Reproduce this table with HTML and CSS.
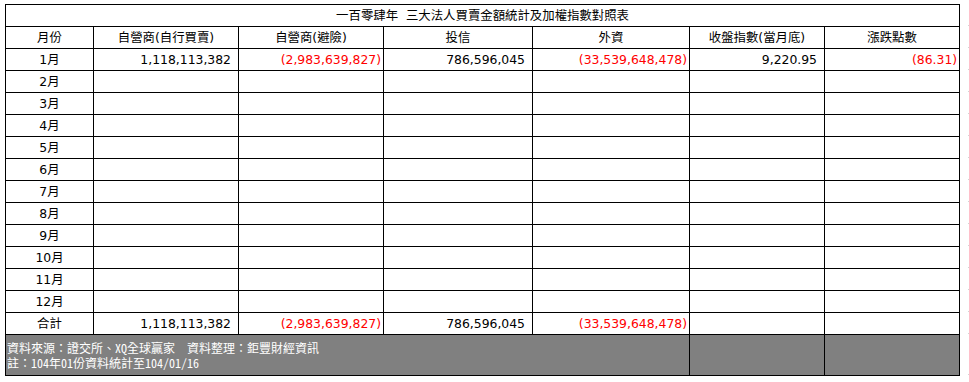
FILE: index.html
```html
<!DOCTYPE html>
<html lang="zh-Hant">
<head>
<meta charset="utf-8">
<title>三大法人買賣金額統計</title>
<link rel="stylesheet" href="styles.css">
</head>
<body>
<div class="sheet">
  <table class="report">
    <colgroup>
      <col class="c-month">
      <col class="c-a">
      <col class="c-b">
      <col class="c-c">
      <col class="c-d">
      <col class="c-e">
      <col class="c-f">
    </colgroup>
    <tr><td class="title" colspan="7">一百零肆年&nbsp;&nbsp;三大法人買賣金額統計及加權指數對照表</td></tr>
    <tr class="head">
      <td>月份</td><td>自營商(自行買賣)</td><td>自營商(避險)</td><td>投信</td><td>外資</td><td>收盤指數(當月底)</td><td>漲跌點數</td>
    </tr>
    <tr>
      <td class="m">1月</td>
      <td class="pos">1,118,113,382</td>
      <td class="neg">(2,983,639,827)</td>
      <td class="pos">786,596,045</td>
      <td class="neg">(33,539,648,478)</td>
      <td class="pos">9,220.95</td>
      <td class="neg">(86.31)</td>
    </tr>
    <tr><td class="m">2月</td><td></td><td></td><td></td><td></td><td></td><td></td></tr>
    <tr><td class="m">3月</td><td></td><td></td><td></td><td></td><td></td><td></td></tr>
    <tr><td class="m">4月</td><td></td><td></td><td></td><td></td><td></td><td></td></tr>
    <tr><td class="m">5月</td><td></td><td></td><td></td><td></td><td></td><td></td></tr>
    <tr><td class="m">6月</td><td></td><td></td><td></td><td></td><td></td><td></td></tr>
    <tr><td class="m">7月</td><td></td><td></td><td></td><td></td><td></td><td></td></tr>
    <tr><td class="m">8月</td><td></td><td></td><td></td><td></td><td></td><td></td></tr>
    <tr><td class="m">9月</td><td></td><td></td><td></td><td></td><td></td><td></td></tr>
    <tr><td class="m">10月</td><td></td><td></td><td></td><td></td><td></td><td></td></tr>
    <tr><td class="m">11月</td><td></td><td></td><td></td><td></td><td></td><td></td></tr>
    <tr><td class="m">12月</td><td></td><td></td><td></td><td></td><td></td><td></td></tr>
    <tr>
      <td class="m">合計</td>
      <td class="pos">1,118,113,382</td>
      <td class="neg">(2,983,639,827)</td>
      <td class="pos">786,596,045</td>
      <td class="neg">(33,539,648,478)</td>
      <td></td>
      <td></td>
    </tr>
    <tr class="foot">
      <td colspan="5" class="note">資料來源：證交所、XQ全球贏家　資料整理：鉅豐財經資訊<br>註：104年01份資料統計至104/01/16</td>
      <td></td>
      <td></td>
    </tr>
  </table>
  <div class="ticks">
    <div class="tick first"></div>
    <div class="tick"></div><div class="tick"></div><div class="tick"></div><div class="tick"></div>
    <div class="tick"></div><div class="tick"></div><div class="tick"></div><div class="tick"></div>
    <div class="tick"></div><div class="tick"></div><div class="tick"></div><div class="tick"></div>
    <div class="tick"></div><div class="tick"></div>
    <div class="tick tall"></div>
  </div>
</div>
</body>
</html>
```

FILE: styles.css
```css
html, body {
  margin: 0;
  background: #ffffff;
}
body {
  padding: 4px 0 0 5px;
}
.sheet {
  display: flex;
  align-items: flex-start;
}
.report {
  border-collapse: collapse;
  table-layout: fixed;
  width: 955px;
  font-family: "DejaVu Sans", "Noto Sans CJK TC", sans-serif;
  font-size: 12.4px;
  color: #000;
}
.c-month { width: 88px; }
.c-a { width: 145px; }
.c-b { width: 145px; }
.c-c { width: 149px; }
.c-d { width: 157px; }
.c-e { width: 135px; }
.c-f { width: 135px; }

.report tr { height: 22px; }
.report td {
  border: 1px solid #000;
  padding: 0;
  height: 21px;
  line-height: 15px;
  white-space: nowrap;
  overflow: hidden;
}
.title, .head td, .m {
  text-align: center;
}
.pos {
  text-align: right;
  padding-right: 7px !important;
}
.neg {
  text-align: right;
  color: #ff0000;
  padding-right: 2px !important;
}
.foot td {
  background: #808080;
  height: 40px;
}
.note {
  color: #ffffff;
  font-family: "Noto Sans Mono CJK TC", "Noto Sans CJK TC", sans-serif;
  font-size: 12px;
  line-height: 15px;
  padding-left: 1px !important;
  vertical-align: middle;
}
.ticks {
  margin-left: 8px;
  display: flex;
  flex-direction: column;
}
.tick {
  width: 3px;
  height: 21px;
  border-bottom: 1px solid #d4d4d4;
}
.tick.first {
  height: 21px;
}
.tick.tall {
  height: 40px;
}
```
